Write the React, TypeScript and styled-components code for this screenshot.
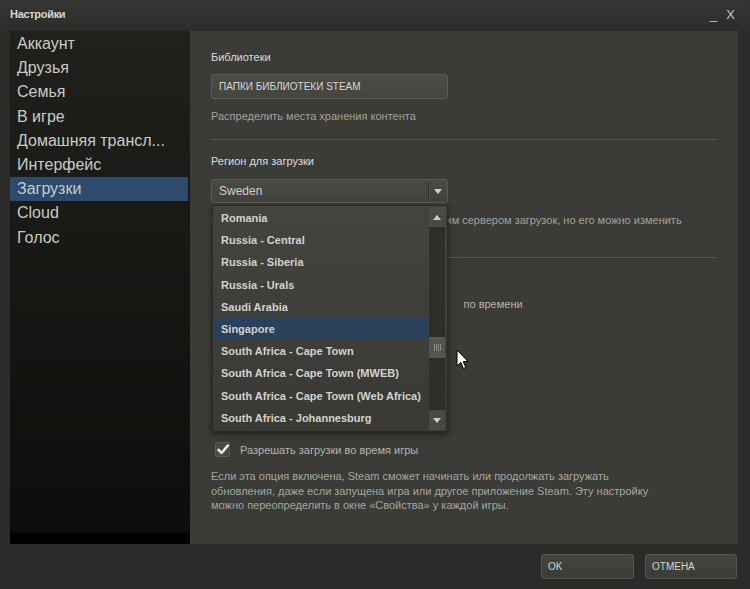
import React from 'react';
import styled, { createGlobalStyle } from 'styled-components';

const Global = createGlobalStyle`
  html, body { margin: 0; padding: 0; background: #262624; }
  body { font-family: "Liberation Sans", Arial, sans-serif; }
  * { box-sizing: border-box; }
`;

const Window = styled.div`
  position: relative;
  width: 750px;
  height: 589px;
  background: #2b2b29;
  display: flex;
  flex-direction: column;
  overflow: hidden;
`;

const TitleBar = styled.div`
  flex: none;
  height: 31px;
  display: flex;
  align-items: center;
  padding: 0 15px 3px 10px;
  background: linear-gradient(#353533, #2c2c2a);
  color: #dcdcd8;
  font-size: 11px;
`;

const Title = styled.div`
  flex: 1;
  font-weight: 700;
  letter-spacing: -0.3px;
  color: #d8d8d4;
`;

const WinControls = styled.div`
  display: flex;
  align-items: flex-end;
  gap: 9px;
  font-size: 13px;
  color: #c8c8c4;
`;

const Body = styled.div`
  flex: none;
  height: 513px;
  display: flex;
  padding: 0 12px 0 10px;
`;

const Sidebar = styled.nav`
  width: 180px;
  flex: none;
  padding-top: 1px;
  background: linear-gradient(#20201d, #0d0d0b 97.6%, #000 98%);
`;

const NavItem = styled.div<{ $active?: boolean }>`
  height: 24.2px;
  line-height: 24.2px;
  margin-right: 2px;
  padding-left: 7px;
  font-size: 16px;
  color: #cacac6;
  white-space: nowrap;
  background: ${p => (p.$active ? '#2d4b6c' : 'transparent')};
`;

const Content = styled.section`
  position: relative;
  flex: 1;
  background: #3b3b37;
  padding: 19px 21px 0 21px;
  font-size: 11px;
  color: #d4d4d0;
`;

const SectionLabel = styled.div<{ $mt?: number }>`
  line-height: 14px;
  margin-top: ${p => p.$mt ?? 0}px;
  color: #dcdcd8;
`;

const WideButton = styled.div`
  margin-top: 10px;
  width: 237px;
  height: 25px;
  display: flex;
  align-items: center;
  padding-left: 7px;
  border: 1px solid #5d5d57;
  border-radius: 3px;
  background: linear-gradient(#4d4d48, #45453f);
  font-size: 10px;
  color: #d8d8d4;
`;

const Hint = styled.div<{ $mt?: number }>`
  margin-top: ${p => p.$mt ?? 10}px;
  line-height: 14px;
  color: #a2a29c;
  white-space: nowrap;
`;

const Separator = styled.div<{ $mt?: number }>`
  margin-top: ${p => p.$mt ?? 16}px;
  height: 1px;
  background: #52524c;
`;

const Select = styled.div<{ $w: number; $mt?: number; $h?: number }>`
  margin-top: ${p => p.$mt ?? 11}px;
  width: ${p => p.$w}px;
  height: ${p => p.$h ?? 24}px;
  flex: none;
  display: flex;
  align-items: center;
  border: 1px solid #5b5b55;
  border-radius: 3px;
  background: linear-gradient(#4a4a45, #42423d);
`;

const SelectValue = styled.div<{ $small?: boolean }>`
  flex: 1;
  padding-left: ${p => (p.$small ? 5 : 7)}px;
  font-size: ${p => (p.$small ? 11 : 12)}px;
  color: #d0d0cc;
`;

const SelectArrow = styled.div`
  width: 19px;
  height: 16px;
  display: flex;
  align-items: center;
  justify-content: center;
  border-left: 1px solid #2e2e2a;
  box-shadow: inset 1px 0 0 #55554f;
`;

const CheckRow = styled.div<{ $mt?: number }>`
  margin-top: ${p => p.$mt ?? 0}px;
  display: flex;
  align-items: center;
  gap: 10px;
  padding-left: 4px;
  height: 15px;
  color: #b4b4ae;
  white-space: nowrap;
`;

const TimeRange = styled.div`
  display: flex;
  align-items: center;
  gap: 5px;
`;

const RowText = styled.span<{ $ml?: number }>`
  margin-left: ${p => p.$ml ?? 0}px;
`;

const CheckBox = styled.div`
  width: 15px;
  height: 15px;
  flex: none;
  display: flex;
  align-items: center;
  justify-content: center;
  border: 1px solid #5b5b55;
  border-radius: 2px;
  background: #4a4a45;
`;

const Description = styled.p`
  margin: 12px 0 0 0;
  line-height: 14.5px;
  color: #a6a6a0;
`;

const DropList = styled.div`
  position: absolute;
  left: 22px;
  top: 174px;
  width: 236px;
  height: 227px;
  display: flex;
  border: 1px solid #2a2a27;
  background: linear-gradient(#44443f, #393935);
  box-shadow: 0 2px 6px rgba(0, 0, 0, 0.5);
`;

const Items = styled.div`
  flex: 1;
  padding-top: 1px;
`;

const Item = styled.div<{ $active?: boolean }>`
  height: 22.2px;
  line-height: 22.2px;
  padding-left: 8px;
  font-size: 11px;
  font-weight: 700;
  color: #d2d2ce;
  white-space: nowrap;
  background: ${p => (p.$active ? '#2b405b' : 'transparent')};
`;

const ScrollBar = styled.div`
  width: 16px;
  margin: 1px 2px 1px 2px;
  display: flex;
  flex-direction: column;
  background: #2e2e2a;
`;

const ScrollBtn = styled.div`
  height: 20px;
  flex: none;
  display: flex;
  align-items: center;
  justify-content: center;
  background: #4a4a45;
`;

const Track = styled.div`
  position: relative;
  flex: 1;
`;

const Thumb = styled.div`
  position: absolute;
  left: 0;
  width: 16px;
  height: 21px;
  display: flex;
  align-items: center;
  justify-content: center;
  gap: 1px;
  background: #55554f;
`;

const Grip = styled.span`
  width: 1px;
  height: 7px;
  background: #8a8a84;
`;

const Footer = styled.div`
  flex: 1;
  display: flex;
  justify-content: flex-end;
  gap: 11px;
  padding: 10px 13px 0 0;
`;

const DialogButton = styled.div<{ $w: number }>`
  width: ${p => p.$w}px;
  height: 25px;
  display: flex;
  align-items: center;
  padding-left: 6px;
  border: 1px solid #55554f;
  border-radius: 3px;
  background: linear-gradient(#45453f, #3c3c37);
  font-size: 10px;
  color: #d4d4d0;
`;

const Cursor = styled.svg`
  position: absolute;
  left: 456px;
  top: 349px;
`;

const Tri = ({ up }: { up?: boolean }) => (
  <svg width="8" height="5" viewBox="0 0 8 5">
    <polygon points={up ? '0,5 8,5 4,0' : '0,0 8,0 4,5'} fill="#cfcfca" />
  </svg>
);

const Check = () => (
  <svg width="12" height="11" viewBox="0 0 12 11">
    <path d="M1.5 5.8 L4.6 9 L10.8 1.5" stroke="#f4f4f2" strokeWidth="2.4" fill="none" strokeLinecap="round" strokeLinejoin="round" />
  </svg>
);

const nav = ['Аккаунт', 'Друзья', 'Семья', 'В игре', 'Домашняя трансл...', 'Интерфейс', 'Загрузки', 'Cloud', 'Голос'];
const regions = [
  'Romania',
  'Russia - Central',
  'Russia - Siberia',
  'Russia - Urals',
  'Saudi Arabia',
  'Singapore',
  'South Africa - Cape Town',
  'South Africa - Cape Town (MWEB)',
  'South Africa - Cape Town (Web Africa)',
  'South Africa - Johannesburg',
];

export default function App() {
  const scrollPos = 0.68;
  return (
    <>
      <Global />
      <Window>
        <TitleBar>
          <Title>Настройки</Title>
          <WinControls>
            <span>_</span>
            <span>X</span>
          </WinControls>
        </TitleBar>
        <Body>
          <Sidebar>
            {nav.map(n => (
              <NavItem key={n} $active={n === 'Загрузки'}>{n}</NavItem>
            ))}
          </Sidebar>
          <Content>
            <SectionLabel>Библиотеки</SectionLabel>
            <WideButton>ПАПКИ БИБЛИОТЕКИ STEAM</WideButton>
            <Hint>Распределить места хранения контента</Hint>
            <Separator />
            <SectionLabel $mt={14}>Регион для загрузки</SectionLabel>
            <Select $w={237}>
              <SelectValue>Sweden</SelectValue>
              <SelectArrow><Tri /></SelectArrow>
            </Select>
            <Hint>Регион по умолчанию определяется ближайшим сервером загрузок, но его можно изменить</Hint>
            <Separator $mt={30} />
            <CheckRow $mt={38}>
              <CheckBox />
              <TimeRange>
                <span>Загружать с</span>
                <Select $w={58} $h={20} $mt={0}>
                  <SelectValue $small>00:00</SelectValue>
                </Select>
                <span>до</span>
                <Select $w={58} $h={20} $mt={0}>
                  <SelectValue $small>08:00</SelectValue>
                </Select>
              </TimeRange>
              <RowText $ml={9}>по времени</RowText>
            </CheckRow>
            <CheckRow $mt={131}>
              <CheckBox><Check /></CheckBox>
              <span>Разрешать загрузки во время игры</span>
            </CheckRow>
            <Description>
              Если эта опция включена, Steam сможет начинать или продолжать загружать
              <br />
              обновления, даже если запущена игра или другое приложение Steam. Эту настройку
              <br />
              можно переопределить в окне «Свойства» у каждой игры.
            </Description>
            <DropList>
              <Items>
                {regions.map(r => (
                  <Item key={r} $active={r === 'Singapore'}>{r}</Item>
                ))}
              </Items>
              <ScrollBar>
                <ScrollBtn><Tri up /></ScrollBtn>
                <Track>
                  <Thumb style={{ top: `calc(${scrollPos * 100}% - ${scrollPos * 21}px)` }}>
                    <Grip /><Grip /><Grip /><Grip />
                  </Thumb>
                </Track>
                <ScrollBtn><Tri /></ScrollBtn>
              </ScrollBar>
            </DropList>
          </Content>
        </Body>
        <Footer>
          <DialogButton $w={93}>OK</DialogButton>
          <DialogButton $w={92}>ОТМЕНА</DialogButton>
        </Footer>
        <Cursor width="13" height="21" viewBox="0 0 13 21">
          <path d="M1 1 L1 17 L4.8 13.4 L7.4 19.5 L9.8 18.5 L7.3 12.5 L12 12.5 Z" fill="#ffffff" stroke="#000" strokeWidth="1" strokeLinejoin="round" />
        </Cursor>
      </Window>
    </>
  );
}
